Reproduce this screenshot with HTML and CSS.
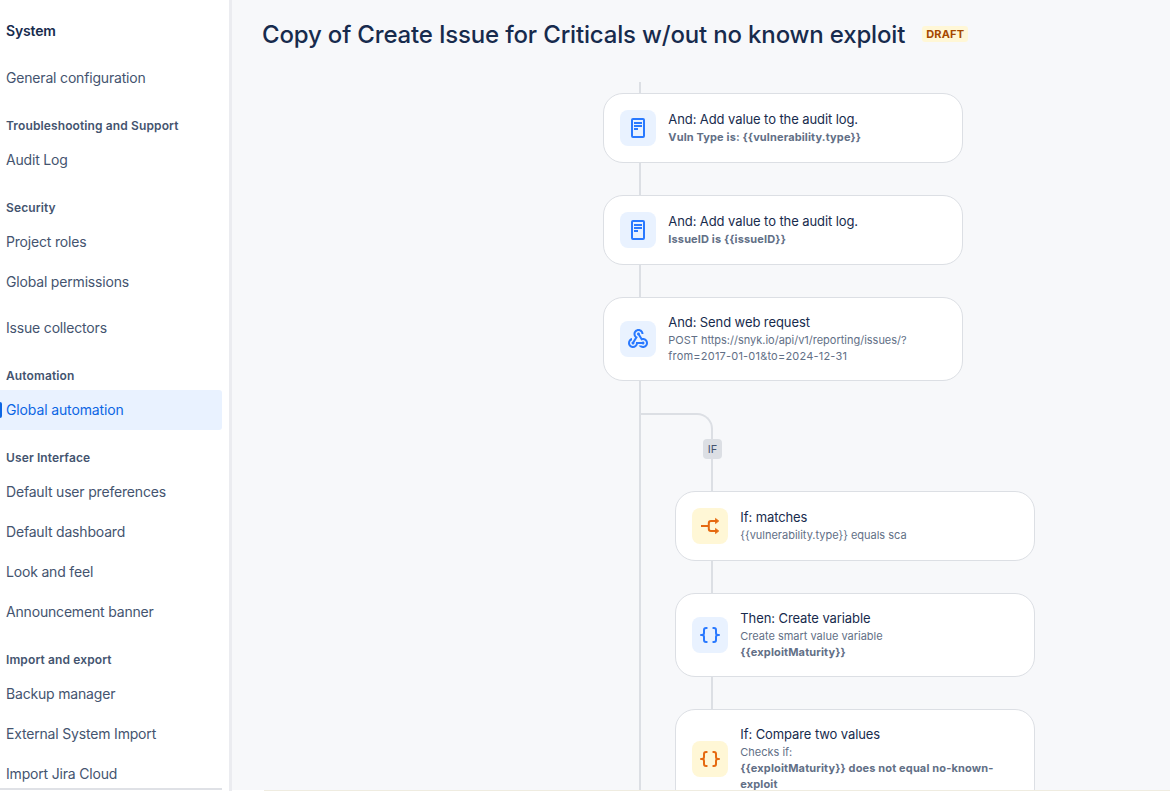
FILE: index.html
```html
<!DOCTYPE html>
<html lang="en">
<head>
<meta charset="utf-8">
<title>Global automation</title>
<link rel="stylesheet" href="styles.css">
</head>
<body>
<svg class="defs" width="0" height="0">
  <symbol id="log" viewBox="0 0 24 24">
    <rect x="6" y="3" width="12" height="18" rx="1" fill="none" stroke="currentColor" stroke-width="2"/>
    <path d="M8 7h8M8 10h8M8 13h4" fill="none" stroke="currentColor" stroke-width="1.8"/>
  </symbol>
  <symbol id="webhook" viewBox="0 0 24 24">
    <path fill="currentColor" d="M10 15h5.88c.27-.31.67-.5 1.12-.5.83 0 1.5.67 1.5 1.5s-.67 1.5-1.5 1.5c-.44 0-.84-.19-1.12-.5H11.9c-.46 2.28-2.48 4-4.900 4-2.760 0-5-2.240-5-5 0-2.420 1.720-4.440 4-4.900v2.070c-1.160.410-2 1.530-2 2.830 0 1.650 1.350 3 3 3s3-1.350 3-3v-1zm2.500-11c1.650 0 3 1.350 3 3h2c0-2.760-2.240-5-5-5s-5 2.240-5 5c0 1.430.6 2.710 1.550 3.620l-2.350 3.900c-.68.14-1.200.75-1.200 1.480 0 .83.67 1.500 1.500 1.500s1.500-.67 1.500-1.500c0-.16-.02-.31-.07-.45l3.380-5.630C10.490 9.610 9.500 8.420 9.500 7c0-1.650 1.350-3 3-3zm4.500 9c-.64 0-1.230.2-1.720.54l-3.050-5.070C11.530 8.350 11 7.740 11 7c0-.83.67-1.500 1.500-1.500S14 6.170 14 7c0 .15-.02.29-.06.43l2.190 3.650c.28-.05.57-.08.87-.08 2.760 0 5 2.240 5 5s-2.240 5-5 5c-1.850 0-3.470-1.010-4.330-2.500h2.670c.48.32 1.050.5 1.660.5 1.650 0 3-1.350 3-3s-1.350-3-3-3z"/>
  </symbol>
  <symbol id="split" viewBox="0 0 24 24">
    <path d="M3 12h7.500M18.500 7H13a2.200 2.200 0 0 0-2.200 2.200v5.600A2.200 2.200 0 0 0 13 17h5.500" fill="none" stroke="currentColor" stroke-width="2"/>
    <path d="M17.500 4.400 20.800 7l-3.300 2.600zM17.500 14.400l3.300 2.600-3.300 2.600z" fill="currentColor" stroke="currentColor" stroke-width=".8" stroke-linejoin="round"/>
  </symbol>
  <symbol id="braces" viewBox="0 0 24 24">
    <path d="M8.700 5H8a2 2 0 0 0-2 2v3a2 2 0 0 1-2 2H3h1a2 2 0 0 1 2 2v3a2 2 0 0 0 2 2h.7M15.300 5h.7a2 2 0 0 1 2 2v3a2 2 0 0 0 2 2h1-1a2 2 0 0 0-2 2v3a2 2 0 0 1-2 2h-.7" fill="none" stroke="currentColor" stroke-width="2" stroke-linecap="round" stroke-linejoin="round"/>
  </symbol>
</svg>
<div class="page">
  <nav class="sidebar">
    <h1 class="nav-title">System</h1>
    <a class="item">General configuration</a>
    <h2 class="group">Troubleshooting and Support</h2>
    <a class="item">Audit Log</a>
    <h2 class="group">Security</h2>
    <a class="item">Project roles</a>
    <a class="item">Global permissions</a>
    <a class="item spaced">Issue collectors</a>
    <h2 class="group">Automation</h2>
    <a class="item selected">Global automation</a>
    <h2 class="group">User Interface</h2>
    <a class="item">Default user preferences</a>
    <a class="item">Default dashboard</a>
    <a class="item">Look and feel</a>
    <a class="item">Announcement banner</a>
    <h2 class="group">Import and export</h2>
    <a class="item">Backup manager</a>
    <a class="item">External System Import</a>
    <a class="item last">Import Jira Cloud</a>
    <div class="nav-end"></div>
  </nav>
  <div class="content">
    <main class="main">
      <header class="header">
        <h1 class="title">Copy of Create Issue for Criticals w/out no known exploit</h1>
        <span class="draft">DRAFT</span>
      </header>
      <div class="flow">
        <div class="link first"></div>
        <section class="card">
          <div class="icon blue"><svg><use href="#log"/></svg></div>
          <div class="text"><div class="name">And: Add value to the audit log.</div><div class="desc"><b>Vuln Type is: {{vulnerability.type}}</b></div></div>
        </section>
        <div class="link"></div>
        <section class="card">
          <div class="icon blue"><svg><use href="#log"/></svg></div>
          <div class="text"><div class="name">And: Add value to the audit log.</div><div class="desc"><b>IssueID is {{issueID}}</b></div></div>
        </section>
        <div class="link"></div>
        <section class="card tall">
          <div class="icon blue"><svg><use href="#webhook"/></svg></div>
          <div class="text"><div class="name">And: Send web request</div><div class="desc">POST https://snyk.io/api/v1/reporting/issues/?<br><span class="dates">from=2017-01-01&amp;to=2024-12-31</span></div></div>
        </section>
        <div class="branch">
          <div class="curve"></div>
          <div class="if">IF</div>
          <div class="steps">
            <div class="link"></div>
            <section class="card">
              <div class="icon yellow"><svg><use href="#split"/></svg></div>
              <div class="text"><div class="name">If: matches</div><div class="desc">{{vulnerability.type}} equals sca</div></div>
            </section>
            <div class="link"></div>
            <section class="card tall">
              <div class="icon blue"><svg><use href="#braces"/></svg></div>
              <div class="text"><div class="name">Then: Create variable</div><div class="desc">Create smart value variable<br><b>{{exploitMaturity}}</b></div></div>
            </section>
            <div class="link"></div>
            <section class="card taller">
              <div class="icon yellow"><svg><use href="#braces"/></svg></div>
              <div class="text"><div class="name">If: Compare two values</div><div class="desc">Checks if:<br><b>{{exploitMaturity}} does not equal no-known-<br>exploit</b></div></div>
            </section>
          </div>
        </div>
      </div>
    </main>
    <div class="footer-edge"></div>
  </div>
</div>
</body>
</html>
```
FILE: styles.css
```css
* { box-sizing: border-box; }
body { margin: 0; font-family: Inter, "Liberation Sans", sans-serif; background: #fff; color: #172b4d; }
h1, h2 { margin: 0; }
.defs { display: block; }
.page { display: flex; height: 791px; overflow: hidden; }

.sidebar { width: 232px; flex: none; padding: 11px 7px 0 0; border-right: 3px solid #ebecf0; display: flex; flex-direction: column; }
.nav-title { height: 40px; line-height: 40px; padding-left: 6px; margin-bottom: 7px; font-size: 14px; font-weight: 600; letter-spacing: -.15px; color: #172b4d; }
.item { flex: none; height: 40px; line-height: 40px; padding-left: 6px; font-size: 14px; letter-spacing: -.18px; color: #44546f; white-space: nowrap; }
.item.spaced { margin-top: 6px; }
.group { flex: none; height: 42px; padding: 20px 0 6px 6px; line-height: 16px; font-size: 12px; font-weight: 600; letter-spacing: .12px; color: #44546f; }
.selected { display: flex; align-items: center; padding-left: 0; background: #e9f2ff; color: #0c66e4; border-radius: 0 3px 3px 0; letter-spacing: -.13px; }
.selected::before { content: ""; width: 2px; height: 16px; margin-right: 4px; background: #0c66e4; border-radius: 0 2px 2px 0; }
.item.last { height: 34px; }
.nav-end { height: 2px; flex: none; background: #dfe1e6; }

.content { flex: 1; min-width: 0; display: flex; flex-direction: column; }
.main { height: 790px; padding-left: 30px; background: #f7f8fa; overflow: hidden; }
.footer-edge { height: 1px; margin-left: 32px; background: #efece0; }
.header { height: 82px; padding-top: 20px; display: flex; align-items: flex-start; }
.title { font-size: 24px; line-height: 29px; font-weight: 500; letter-spacing: -.17px; white-space: nowrap; }
.draft { margin: 6px 0 0 17px; height: 16px; line-height: 16px; padding: 0 4px; border-radius: 3px; background: #fff7d6; color: #a54800; font-size: 11px; font-weight: 700; letter-spacing: .2px; }

.flow { margin-left: 341px; }
.link { width: 2px; height: 32px; margin-left: 36px; background: #dcdfe4; }
.link.first { height: 11px; }
.card { width: 360px; height: 70px; padding: 0 16px; display: flex; align-items: center; gap: 12.3px; background: #fff; border: 1px solid #dcdfe4; border-radius: 20px; }
.tall { height: 84px; }
.taller { height: 100px; }
.icon { width: 36px; height: 36px; flex: none; display: grid; place-items: center; border-radius: 8px; }
.icon svg { width: 24px; height: 24px; }
.blue { background: #e9f2ff; color: #2979ff; }
.yellow { background: #fff7d6; color: #e56910; }
.text { padding-bottom: 2px; white-space: nowrap; }
.name { font-size: 13px; line-height: 20px; letter-spacing: -.09px; }
.desc { font-size: 11px; line-height: 16px; letter-spacing: -.01px; color: #626f86; }
.desc b { font-weight: 700; letter-spacing: .14px; }
.dates { letter-spacing: .2px; }
.branch { margin-left: 36px; height: 500px; padding-top: 32px; border-left: 2px solid #dcdfe4; }
.curve { width: 72px; height: 26px; border: solid #dcdfe4; border-width: 2px 2px 0 0; border-radius: 0 16px 0 0; }
.if { width: 19px; height: 20px; margin-left: 62px; border-radius: 4px; background: #dcdfe4; color: #44546f; font-size: 11px; line-height: 20px; text-align: center; }
.steps { margin-left: 34px; }
```
